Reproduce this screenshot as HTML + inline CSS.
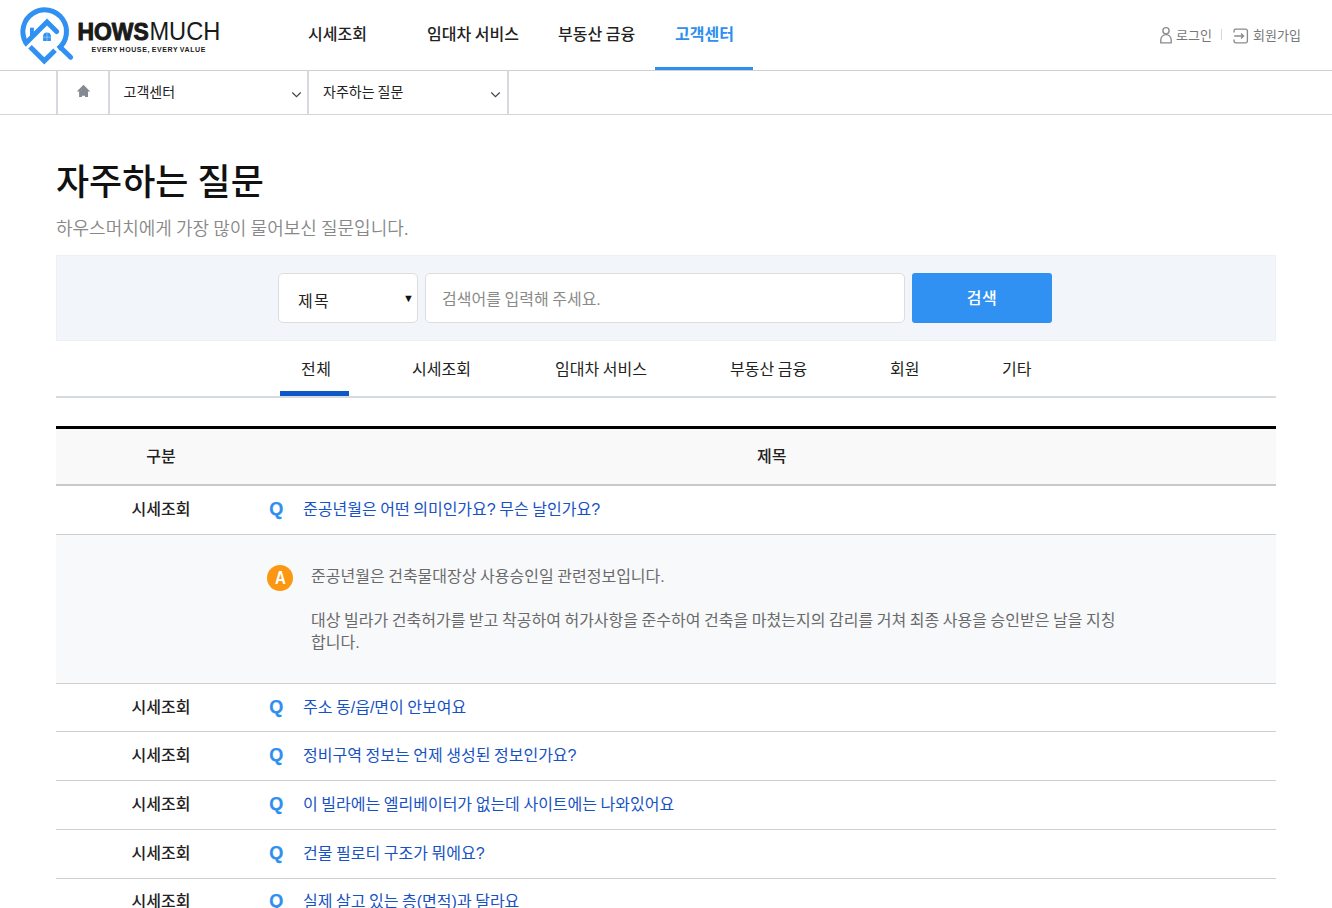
<!DOCTYPE html>
<html lang="ko">
<head>
<meta charset="utf-8">
<title>자주하는 질문 - HOWSMUCH</title>
<style>
*{box-sizing:border-box;margin:0;padding:0}
html,body{width:1332px;height:908px;overflow:hidden;background:#fff}
body{position:relative;font-family:"Liberation Sans","Noto Sans CJK KR",sans-serif;font-size:16px;color:#222;word-spacing:-0.054em}
.abs{position:absolute;white-space:nowrap}
.t{position:absolute;white-space:nowrap;line-height:24px;height:24px}
/* header */
#hdr{position:absolute;left:0;top:0;width:1332px;height:71px;border-bottom:1px solid #cfcfcf;background:#fff}
.gnb{font-size:16px;font-weight:500;color:#222}
.gnb.on{color:#2f8fef;font-weight:700}
#gnbbar{position:absolute;left:655px;top:67px;width:98px;height:3px;background:#2d8ff0}
.util{font-size:13px;color:#777;font-weight:400}
/* breadcrumb */
#loc{position:absolute;left:0;top:71px;width:1332px;height:44px;border-bottom:1px solid #d4d4d4}
.vline{position:absolute;top:71px;width:2px;height:43px;background:#d6d9de}
.loc{font-size:14px;color:#222}
/* title */
#h1{font-size:36px;font-weight:500;color:#111;line-height:44px;height:44px}
#sub{font-size:18px;font-weight:350;color:#888;line-height:24px}
/* search */
#sbox{position:absolute;left:56px;top:255px;width:1220px;height:86px;border:1px solid #edf0f5;background:#f2f5fa}
#sel{position:absolute;left:278px;top:273px;width:140px;height:50px;border:1px solid #ddd;border-radius:5px;background:#fff}
#inp{position:absolute;left:425px;top:273px;width:480px;height:50px;border:1px solid #ddd;border-radius:5px;background:#fff}
#btn{position:absolute;left:912px;top:273px;width:140px;height:50px;border-radius:3px;background:#3091f2;color:#fff;font-weight:500;font-size:16px;letter-spacing:.5px;text-align:center;line-height:52px}
/* tabs */
.tab{font-size:16px;color:#222}
#tabbar{position:absolute;left:280px;top:391px;width:69px;height:5px;background:#0d58c8}
#tabline{position:absolute;left:56px;top:396px;width:1220px;height:2px;background:#d6dbe0}
/* table */
#thtop{position:absolute;left:56px;top:426px;width:1220px;height:3px;background:#000}
#th{position:absolute;left:56px;top:429px;width:1220px;height:55px;background:#f9f9f9}
#thbot{position:absolute;left:56px;top:484px;width:1220px;height:2px;background:#c9c9c9}
.hl{position:absolute;left:56px;width:1220px;height:1px;background:#cfcfcf}
#ans{position:absolute;left:56px;top:535px;width:1220px;height:148px;background:#f8f9fb}
.cat{font-size:16px;font-weight:500;color:#222;width:116px;text-align:center;left:103px}
.q{font-size:18px;font-weight:700;color:#2f8fef;left:269.3px;margin-top:-.7px;-webkit-text-stroke:.25px #2f8fef;transform:scaleX(1.0);transform-origin:0 50%}
.qt{font-size:16px;color:#1652c4;left:303px}
.at{font-size:16px;color:#6a6a6a;left:311px;font-weight:400}
#aic{position:absolute;left:267px;top:565px;width:26px;height:26px;border-radius:50%;background:#fb9712;color:#fff;font-weight:700;font-size:17.5px;text-align:center;line-height:26px}
</style>
</head>
<body>
<div id="hdr"></div>
<svg class="abs" style="left:0;top:0" width="260" height="70" viewBox="0 0 260 70">
  <defs><clipPath id="lc"><circle cx="44.7" cy="31.6" r="24.3"/></clipPath></defs>
  <g fill="none" stroke="#3091f2" stroke-width="5">
    <path d="M25.82 42.5 A21.8 21.8 0 1 1 58.24 48.68"/>
    <path d="M22 47 L47 22 L56.6 31.6" stroke-linecap="round" stroke-linejoin="miter" clip-path="url(#lc)"/>
    <path d="M30 46.8 L44.3 60.9 L55.1 50.3" stroke-linejoin="miter"/>
    <path d="M60.6 47.5 L70.65 57.2" stroke-linecap="round"/>
  </g>
  <rect x="30" y="27.7" width="3.9" height="8.5" fill="#3091f2"/>
  <path d="M43.1 40.9 v-4.6 a3.9 3.9 0 0 1 7.8 0 v4.6 z" fill="#3091f2"/>
  <path d="M47 32.4 V40.9 M43.1 37.2 H50.9" stroke="#fff" stroke-opacity=".55" stroke-width=".7" fill="none"/>
  <text x="77.4" y="39.9" font-family="Liberation Sans, sans-serif" font-weight="700" font-size="24.2" fill="#1a1a1a" stroke="#1a1a1a" stroke-width="1" stroke-linejoin="round" textLength="71.3" lengthAdjust="spacingAndGlyphs">HOWS</text>
  <text x="149.4" y="40.4" font-family="Liberation Sans, sans-serif" font-weight="400" font-size="25.4" fill="#1a1a1a" textLength="71" lengthAdjust="spacingAndGlyphs">MUCH</text>
  <text x="91.4" y="51.9" font-family="Liberation Sans, sans-serif" font-weight="700" font-size="7" fill="#1a1a1a" textLength="114" lengthAdjust="spacing">EVERY HOUSE, EVERY VALUE</text>
</svg>

<div class="t gnb" style="left:308px;top:23px">시세조회</div>
<div class="t gnb" style="left:427px;top:23px">임대차 서비스</div>
<div class="t gnb" style="left:558px;top:23px">부동산 금융</div>
<div class="t gnb on" style="left:675px;top:23px">고객센터</div>
<div id="gnbbar"></div>

<svg class="abs" style="left:1158px;top:25px" width="100" height="22" viewBox="0 0 100 22">
  <g fill="none" stroke="#8a8a8a" stroke-width="1.35">
    <circle cx="8" cy="5.7" r="3.1"/>
    <path d="M2.8 17.9 v-3.1 a5.2 5.2 0 0 1 10.4 0 v3.1 z" stroke-linejoin="round"/>
    <path d="M76 7.6 V5.9 A1.8 1.8 0 0 1 77.8 4.1 H87.6 A1.8 1.8 0 0 1 89.4 5.9 V16.1 A1.8 1.8 0 0 1 87.6 17.9 H77.8 A1.8 1.8 0 0 1 76 16.1 V14.4"/>
    <path d="M76.2 11 H85.5 M83 8.4 L85.6 11 L83 13.6"/>
  </g>
</svg>
<div class="t util" style="left:1176px;top:23.5px">로그인</div>
<div class="abs" style="left:1221px;top:29px;width:1px;height:11px;background:#d5d5d5"></div>
<div class="t util" style="left:1253px;top:23.5px">회원가입</div>

<div id="loc"></div>
<div class="vline" style="left:56px"></div>
<div class="vline" style="left:108px"></div>
<div class="vline" style="left:307px"></div>
<div class="vline" style="left:507px"></div>
<svg class="abs" style="left:76px;top:84px" width="16" height="14" viewBox="0 0 16 14"><path d="M7.5 0.8 L14.2 7.6 H12 V12.9 H9 V11.7 H6 V12.9 H3.1 V7.6 H0.8 Z" fill="#858993"/></svg>
<div class="t loc" style="left:123.5px;top:80px">고객센터</div>
<div class="t loc" style="left:323px;top:80px">자주하는 질문</div>
<svg class="abs" style="left:290px;top:90px" width="12" height="8" viewBox="0 0 12 8"><path d="M2.3 2.5 L6.5 6.6 L10.7 2.5" fill="none" stroke="#444" stroke-width="1.2"/></svg>
<svg class="abs" style="left:489px;top:90px" width="12" height="8" viewBox="0 0 12 8"><path d="M2.3 2.5 L6.5 6.6 L10.7 2.5" fill="none" stroke="#444" stroke-width="1.2"/></svg>

<div class="t" id="h1" style="left:56px;top:161px">자주하는 질문</div>
<div class="t" id="sub" style="left:56px;top:217px">하우스머치에게 가장 많이 물어보신 질문입니다.</div>

<div id="sbox"></div>
<div id="sel"></div>
<div class="t" style="left:298px;top:289.5px;font-size:16px;letter-spacing:1.2px;color:#222">제목</div>
<div class="t" style="left:403px;top:285.5px;font-size:11px;color:#111">▼</div>
<div id="inp"></div>
<div class="t" style="left:442px;top:287.5px;font-size:16px;color:#8a8a8a">검색어를 입력해 주세요.</div>
<div id="btn">검색</div>

<div class="t tab" style="left:301px;top:357.5px;letter-spacing:.6px">전체</div>
<div class="t tab" style="left:412px;top:357.5px">시세조회</div>
<div class="t tab" style="left:555px;top:357.5px">임대차 서비스</div>
<div class="t tab" style="left:730px;top:357.5px">부동산 금융</div>
<div class="t tab" style="left:890px;top:357.5px">회원</div>
<div class="t tab" style="left:1002px;top:357.5px">기타</div>
<div id="tabline"></div>
<div id="tabbar"></div>

<div id="thtop"></div>
<div id="th"></div>
<div id="thbot"></div>
<div class="t cat" style="top:445px;font-weight:500">구분</div>
<div class="t" style="left:757px;top:445px;font-size:16px;font-weight:500">제목</div>

<div class="t cat" style="top:498px">시세조회</div>
<div class="t q" style="top:498px">Q</div>
<div class="t qt" style="top:498px">준공년월은 어떤 의미인가요? 무슨 날인가요?</div>
<div class="hl" style="top:534px"></div>

<div id="ans"></div>
<div id="aic"><span style="display:inline-block;transform:scaleX(.86)">A</span></div>
<div class="abs at" style="top:566px;line-height:22px">준공년월은 건축물대장상 사용승인일 관련정보입니다.<br><br>대상 빌라가 건축허가를 받고 착공하여 허가사항을 준수하여 건축을 마쳤는지의 감리를 거쳐 최종 사용을 승인받은 날을 지칭<br>합니다.</div>
<div class="hl" style="top:683px"></div>

<div class="t cat" style="top:696px">시세조회</div>
<div class="t q" style="top:696px">Q</div>
<div class="t qt" style="top:696px">주소 동/읍/면이 안보여요</div>
<div class="hl" style="top:731px"></div>

<div class="t cat" style="top:744px">시세조회</div>
<div class="t q" style="top:744px">Q</div>
<div class="t qt" style="top:744px">정비구역 정보는 언제 생성된 정보인가요?</div>
<div class="hl" style="top:780px"></div>

<div class="t cat" style="top:793px">시세조회</div>
<div class="t q" style="top:793px">Q</div>
<div class="t qt" style="top:793px">이 빌라에는 엘리베이터가 없는데 사이트에는 나와있어요</div>
<div class="hl" style="top:829px"></div>

<div class="t cat" style="top:842px">시세조회</div>
<div class="t q" style="top:842px">Q</div>
<div class="t qt" style="top:842px">건물 필로티 구조가 뭐에요?</div>
<div class="hl" style="top:878px"></div>

<div class="t cat" style="top:890px">시세조회</div>
<div class="t q" style="top:890px">Q</div>
<div class="t qt" style="top:890px">실제 살고 있는 층(면적)과 달라요</div>
</body>
</html>
